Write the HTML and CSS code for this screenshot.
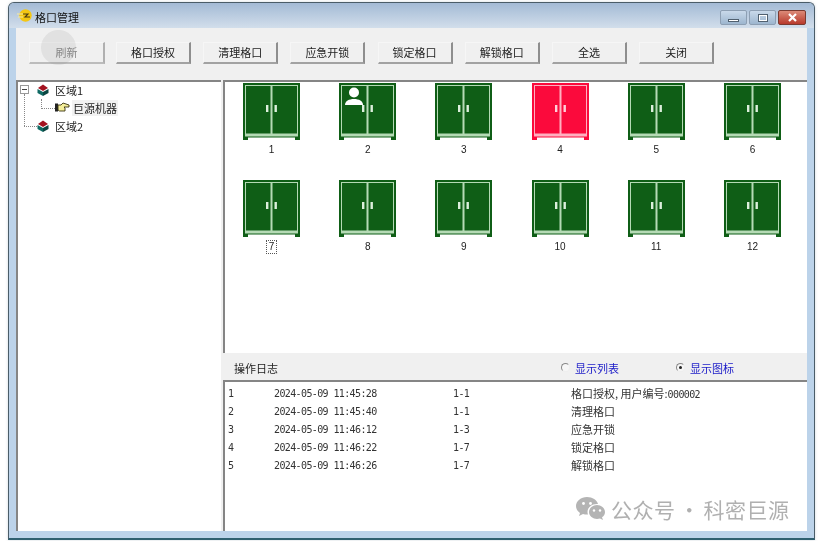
FILE: index.html
```html
<!DOCTYPE html>
<html lang="zh">
<head>
<meta charset="utf-8">
<title>格口管理</title>
<link rel="stylesheet" href="styles.css">
</head>
<body>
<svg class="defs" width="0" height="0" aria-hidden="true">
  <symbol id="cab" viewBox="0 0 57 57">
    <path class="cab-body" d="M0 0H57V57H52V54.500H5V57H0Z"/>
    <path class="cab-line" d="M2 2H55V53.500H2ZM3 3V50.500H27.500V3ZM29.500 3V50.500H54V3Z" fill-rule="evenodd"/>
    <rect class="cab-handle" x="23" y="22" width="2.400" height="7"/>
    <rect class="cab-handle" x="31.500" y="22" width="2.400" height="7"/>
  </symbol>
  <symbol id="zone" viewBox="0 0 12 12">
    <path fill="#a3121f" d="M1 4 6 .5l5 3.500-5 3z"/>
    <path fill="#0f6a64" d="M.5 5 6 8v4L.5 9z"/>
    <path fill="#0a4642" d="M11.500 5 6 8v4l5.500-3z"/>
  </symbol>
</svg>
<div class="window">
  <header class="titlebar">
    <svg class="app-icon" width="15" height="13" viewBox="0 0 15 13"><circle cx="8.500" cy="6.500" r="6.200" fill="#f4c612"/><path d="M0 5h6M1 8h5" stroke="#f7e9a0" stroke-width="1.200"/><path d="M6 5h5l-3 3h5" stroke="#4a3a10" stroke-width="1.100" fill="none"/></svg>
    <span class="title">格口管理</span>
    <div class="controls">
      <span class="ctl ctl-min"><i class="glyph-min"></i></span>
      <span class="ctl ctl-max"><i class="glyph-max"></i></span>
      <span class="ctl ctl-close"><svg width="11" height="9" viewBox="0 0 11 9"><path d="M2 1l7 7M9 1 2 8" stroke="#fff" stroke-width="2.200"/></svg></span>
    </div>
  </header>
  <nav class="toolbar">
    <button class="btn btn-disabled">刷新</button>
    <button class="btn">格口授权</button>
    <button class="btn">清理格口</button>
    <button class="btn">应急开锁</button>
    <button class="btn">锁定格口</button>
    <button class="btn">解锁格口</button>
    <button class="btn">全选</button>
    <button class="btn">关闭</button>
    <span class="touch-dot"></span>
  </nav>
  <main class="panes">
    <aside class="tree">
      <div class="tree-row">
        <span class="expander"></span>
        <svg class="zone-icon" width="12" height="12"><use href="#zone"/></svg>
        <span>区域1</span>
      </div>
      <div class="tree-row tree-child">
        <svg class="hand" width="15" height="11" viewBox="0 0 15 11"><rect x="0" y="1.500" width="3" height="8" fill="#222"/><path d="M3 3h3l2-2 6 2v2H9l1 1v3H4.500L3 8z" fill="#f4ee9a" stroke="#3a3410" stroke-width=".9"/></svg>
        <span class="selected">巨源机器</span>
      </div>
      <div class="tree-row">
        <span class="expander-none"></span>
        <svg class="zone-icon" width="12" height="12"><use href="#zone"/></svg>
        <span>区域2</span>
      </div>
    </aside>
    <section class="content">
      <div class="cabinets">
        <figure class="cell"><svg class="cabinet" width="57" height="57"><use href="#cab"/></svg><figcaption>1</figcaption></figure>
        <figure class="cell has-user"><svg class="cabinet" width="57" height="57"><use href="#cab"/></svg><svg class="user" width="18" height="19" viewBox="0 0 18 19"><circle cx="9" cy="5.500" r="5" fill="#fff"/><path d="M0 18c0-4 4-6 9-6s9 2 9 6z" fill="#fff"/></svg><figcaption>2</figcaption></figure>
        <figure class="cell"><svg class="cabinet" width="57" height="57"><use href="#cab"/></svg><figcaption>3</figcaption></figure>
        <figure class="cell cell-red"><svg class="cabinet" width="57" height="57"><use href="#cab"/></svg><figcaption>4</figcaption></figure>
        <figure class="cell"><svg class="cabinet" width="57" height="57"><use href="#cab"/></svg><figcaption>5</figcaption></figure>
        <figure class="cell"><svg class="cabinet" width="57" height="57"><use href="#cab"/></svg><figcaption>6</figcaption></figure>
        <figure class="cell"><svg class="cabinet" width="57" height="57"><use href="#cab"/></svg><figcaption><span class="focus">7</span></figcaption></figure>
        <figure class="cell"><svg class="cabinet" width="57" height="57"><use href="#cab"/></svg><figcaption>8</figcaption></figure>
        <figure class="cell"><svg class="cabinet" width="57" height="57"><use href="#cab"/></svg><figcaption>9</figcaption></figure>
        <figure class="cell"><svg class="cabinet" width="57" height="57"><use href="#cab"/></svg><figcaption>10</figcaption></figure>
        <figure class="cell"><svg class="cabinet" width="57" height="57"><use href="#cab"/></svg><figcaption>11</figcaption></figure>
        <figure class="cell"><svg class="cabinet" width="57" height="57"><use href="#cab"/></svg><figcaption>12</figcaption></figure>
      </div>
      <div class="log-head">
        <span class="log-title">操作日志</span>
        <label class="radio radio-list"><i class="dot"></i>显示列表</label>
        <label class="radio radio-icons"><i class="dot dot-on"></i>显示图标</label>
      </div>
      <div class="log">
        <div class="log-row"><span>1</span><span>2024-05-09 11:45:28</span><span>1-1</span><span>格口授权, 用户编号:<span class="num">000002</span></span></div>
        <div class="log-row"><span>2</span><span>2024-05-09 11:45:40</span><span>1-1</span><span>清理格口</span></div>
        <div class="log-row"><span>3</span><span>2024-05-09 11:46:12</span><span>1-3</span><span>应急开锁</span></div>
        <div class="log-row"><span>4</span><span>2024-05-09 11:46:22</span><span>1-7</span><span>锁定格口</span></div>
        <div class="log-row"><span>5</span><span>2024-05-09 11:46:26</span><span>1-7</span><span>解锁格口</span></div>
        <div class="watermark">
          <svg width="29" height="24" viewBox="0 0 29 24"><path fill="#b4b4b4" d="M11 0C5 0 0 4 0 9c0 3 1.500 5 4 7l-1 3 4-2c1.300.4 2.600.6 4 .6h1c-.3-.9-.5-1.700-.5-2.600 0-4.600 4.400-8 9.500-8h1C21 3 16.500 0 11 0z"/><path fill="#b4b4b4" d="M29 15c0-4-4-7-8-7s-8 3-8 7 4 7 8 7c1 0 2-.2 3-.5l3 1.500-1-2.700c2-1.300 3-3 3-5.300z"/><circle cx="7.500" cy="6.500" r="1.400" fill="#fff"/><circle cx="14.500" cy="6.500" r="1.400" fill="#fff"/><circle cx="18" cy="13.500" r="1.200" fill="#fff"/><circle cx="24" cy="13.500" r="1.200" fill="#fff"/></svg>
          <span>公众号 · 科密巨源</span>
        </div>
      </div>
    </section>
  </main>
</div>
</body>
</html>
```
FILE: styles.css
```css
* { box-sizing: border-box; }
html, body { margin: 0; height: 100%; background: #fff; overflow: hidden; }
body { font-family: "Noto Sans CJK SC", "Liberation Sans", sans-serif; font-size: 11px; color: #222; padding: 2px 6px 0 8px; }
.defs { position: absolute; }
.window {
  width: 807px; height: 538px; display: flex; flex-direction: column;
  border: 1px solid #4a5c68; border-radius: 6px 6px 0 0;
  border-bottom: 2px solid #2f6070;
  background: #bcd3ea; padding: 0 7px 7px;
  box-shadow: 0 0 3px rgba(120,140,160,.35);
  filter: blur(.35px);
}
.titlebar {
  height: 25px; margin: 0 -7px; padding: 0 7px 0 8px; display: flex; align-items: center; flex: none;
  background: linear-gradient(#a3bad5, #d2deeb); border-radius: 5px 5px 0 0;
}
.app-icon { margin-right: 3px; }
.title { font-size: 11px; line-height: 14px; color: #111; margin-top: 2px; }
.controls { margin-left: auto; display: flex; gap: 2px; align-self: flex-start; margin-top: 7px; margin-right: 1px; }
.ctl { height: 15px; display: flex; align-items: center; justify-content: center; border: 1px solid #8d9fb3; border-radius: 2px; }
.ctl-min, .ctl-max { width: 27px; background: linear-gradient(#c9d9ea, #9db6cf); }
.ctl-close { width: 28px; background: linear-gradient(#dc8a78, #b83a2c); border-color: #7a3a30; }
.glyph-min { width: 11px; height: 3px; background: #fff; border: 1px solid #50606f; margin-top: 6px; }
.glyph-max { width: 10px; height: 8px; background: transparent; border: 2px solid #fff; outline: 1px solid #50606f; outline-offset: -1px; }
.toolbar {
  position: relative; height: 50px; background: #f0f0f0; display: flex; align-items: flex-start;
  padding: 14px 0 0 13px; gap: 12.2px; flex: none;
}
.btn {
  width: 75px; height: 22px; padding: 0 0 1px; font: inherit; color: #222; background: #f0f0f0;
  border: 1px solid #f6f6f6; border-right: 2px solid #8e8e8e; border-bottom: 2px solid #a2a2a2;
}
.btn-disabled { width: 76px; margin-right: -1.2px; color: #8a8a8a; border-right-color: #b0b0b0; border-bottom-color: #bcbcbc; }
.touch-dot {
  position: absolute; left: 25px; top: 2px; width: 35px; height: 35px; border-radius: 50%;
  background: rgba(120,120,120,.13);
}
.panes { flex: 1; display: flex; gap: 2px; padding-top: 2px; background: #f0f0f0; min-height: 0; }
.tree { width: 205px; flex: none; background: #fff; border-top: 2px solid #858585; border-left: 2px solid #858585; margin-bottom: 0; }
.tree-row { height: 18px; display: flex; align-items: center; padding-left: 2px; position: relative; top: -1.5px; }
.expander { width: 9px; height: 9px; border: 1px solid #999; position: relative; margin-right: 8px; flex: none; }
.expander::after { content: ""; position: absolute; left: 1px; right: 1px; top: 3px; height: 1px; background: #444; }
.expander-none { width: 9px; margin-right: 8px; flex: none; position: relative; }
.expander-none::before { content: ""; position: absolute; left: 4px; top: -32px; height: 32px; border-left: 1px dotted #888; }
.expander-none::after { content: ""; position: absolute; left: 4px; width: 13px; top: 0; border-top: 1px dotted #888; }
.zone-icon { margin-right: 6px; flex: none; }
.tree-child { padding-left: 37px; }
.tree-child::before { content: ""; position: absolute; left: 23px; top: 0; height: 9px; width: 13px; border-left: 1px dotted #888; border-bottom: 1px dotted #888; }
.hand { margin-right: 2px; flex: none; }
.selected { background: #f2f2f2; padding: 0 1px; }
.content { flex: 1; display: flex; flex-direction: column; min-width: 0; }
.cabinets {
  height: 273px; flex: none; background: #fff; border-top: 2px solid #858585; border-left: 2px solid #858585;
  display: grid; grid-template-columns: repeat(6, 96.2px); grid-auto-rows: 97px; padding: 1px 0 0 18px; align-content: start;
}
.cell { margin: 0; width: 57px; display: flex; flex-direction: column; align-items: center; position: relative; color: #0f5e16; --line: #b5dab5; --handle: #dcefdc; }
.cell-red { color: #fb0a3c; --line: #ffb0c0; --handle: #ffd0da; }
.cabinet { display: block; }
.cab-body { fill: currentColor; }
.cab-line { fill: var(--line); }
.cab-handle { fill: var(--handle); }
.user { position: absolute; left: 6px; top: 4px; }
figcaption { font: 10px/12px "Liberation Sans", sans-serif; color: #222; margin-top: 4px; }
.focus { display: inline-block; border: 1px dotted #555; padding: 0 2px; line-height: 12px; margin-top: -1px; }
.log-head { height: 25px; margin-top: 2px; display: flex; align-items: center; background: #f0f0f0; padding-left: 11px; position: relative; flex: none; }
.log-title { width: 327px; color: #222; }
.radio { display: flex; align-items: center; color: #1a1ac8; }
.radio-list { width: 115px; }
.dot { width: 9px; height: 9px; border-radius: 50%; margin-right: 5px; border: 1px solid #888; border-right-color: #eee; border-bottom-color: #eee; background: #f6f6f6; position: relative; }
.dot-on::after { content: ""; position: absolute; left: 2px; top: 2px; width: 3px; height: 3px; border-radius: 50%; background: #222; }
.log { flex: 1; position: relative; background: #fff; border-top: 2px solid #858585; border-left: 2px solid #858585; padding-top: 2px; min-height: 0; }
.log-row { height: 18px; display: grid; grid-template-columns: 46px 179px 118px 1fr; align-items: center; padding-left: 3px; font-family: "DejaVu Sans Mono", "Noto Sans CJK SC", monospace; font-size: 10px; letter-spacing: -.62px; color: #333; }
.log-row > span:last-child { font-family: "Noto Sans CJK SC", "Liberation Sans", sans-serif; font-size: 11px; letter-spacing: 0; }
.log-row .num { font-family: "DejaVu Sans Mono", monospace; font-size: 10px; letter-spacing: -.62px; }
.watermark {
  position: absolute; left: 351px; top: 114px; display: flex; align-items: center; gap: 6px;
  color: #b0b0b0; font-size: 21px; letter-spacing: .5px; word-spacing: -2px; line-height: 26px; white-space: nowrap;
}
```
